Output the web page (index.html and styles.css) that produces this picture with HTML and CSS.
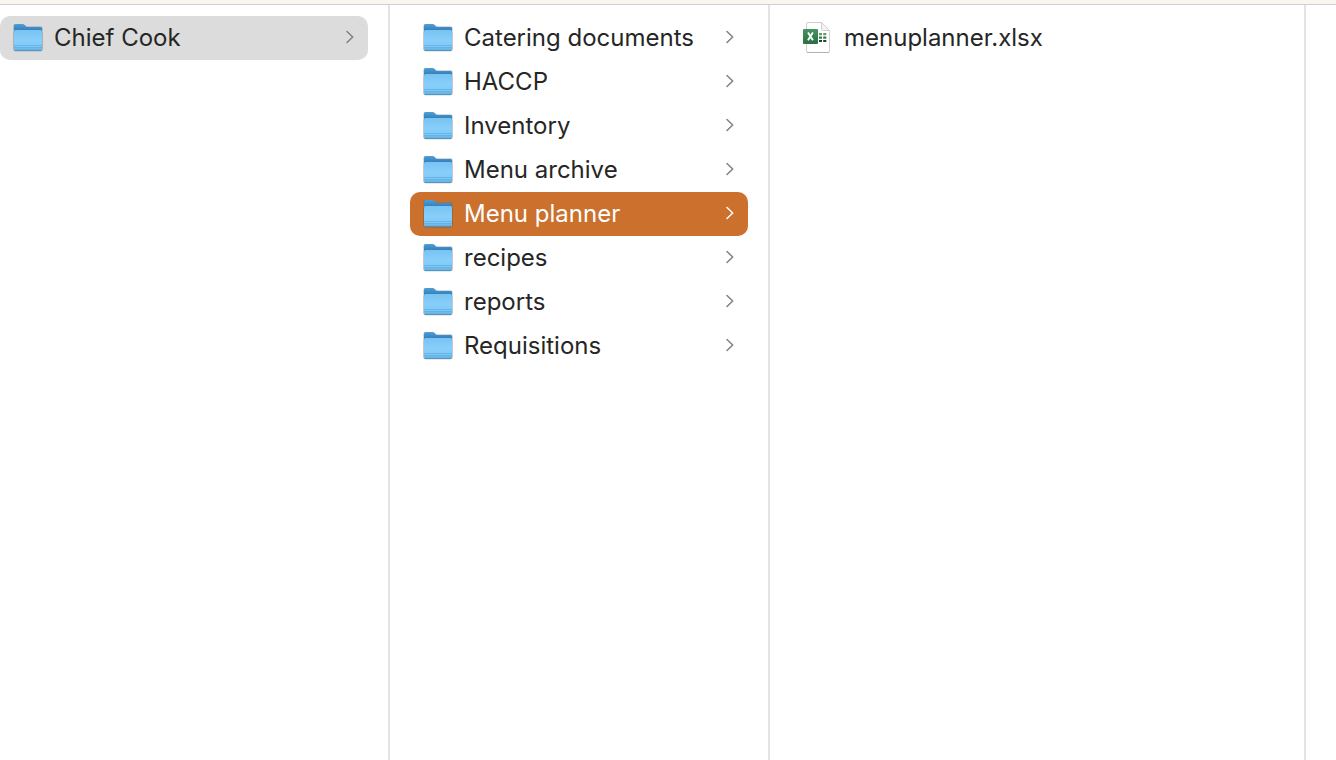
FILE: index.html
```html
<!DOCTYPE html>
<html lang="en">
<head>
<meta charset="utf-8">
<title>Menu planner</title>
<link rel="stylesheet" href="styles.css">
</head>
<body>
<svg class="defs" width="0" height="0" aria-hidden="true">
  <defs>
    <linearGradient id="back" x1="0" y1="0" x2="0" y2="1">
      <stop offset="0" stop-color="#4d9fd6"/><stop offset=".25" stop-color="#3581bd"/><stop offset="1" stop-color="#3581bd"/>
    </linearGradient>
    <linearGradient id="front" x1="0" y1="0" x2="0" y2="1">
      <stop offset="0" stop-color="#78c3f2"/><stop offset=".5" stop-color="#88cefa"/><stop offset="1" stop-color="#7ac6f5"/>
    </linearGradient>
    <linearGradient id="excel" x1="0" y1="0" x2="0" y2="1">
      <stop offset="0" stop-color="#459563"/><stop offset="1" stop-color="#2c6e41"/>
    </linearGradient>
  </defs>
  <symbol id="folder" viewBox="0 0 32 32">
    <path d="M1.500 27V10H30.500V27Q30.500 29.500 28.500 29.500H3.500Q1.500 29.500 1.500 27Z" fill="#000" opacity=".18"/>
    <path d="M1.500 26.500V4Q1.500 2 3.500 2H10Q11.500 2 12.500 3L14.500 4.600H29Q30.500 4.600 30.500 6.500V27Q30.500 29 29 29H3Q1.500 29 1.500 27Z" fill="#55636f" opacity=".5"/>
    <path d="M2 26V4Q2 2 4 2H10Q11.500 2 12.500 3L14.500 5H28.500Q30 5 30 7V26Z" fill="url(#back)"/>
    <path d="M2 9.500Q2 8 3.500 8H28.500Q30 8 30 9.500V27Q30 28.500 28.500 28.500H3.500Q2 28.500 2 27Z" fill="url(#front)"/>
    <path d="M2 25.500H30V27Q30 28.500 28.500 28.500H3.500Q2 28.500 2 27Z" fill="#6fbcec"/>
    <path d="M2 23.500H30M2 25.500H30" stroke="#5cabdf" stroke-width=".7"/>
    <path d="M3 28.300H29" stroke="#3e87bb" stroke-width=".8"/>
  </symbol>
  <symbol id="sheet" viewBox="0 1.500 32 32">
    <path d="M4.500 3Q4.500 1.500 6 1.500H19.500L27.500 9.500V30Q27.500 31.500 26 31.500H6Q4.500 31.500 4.500 30Z" transform="translate(0 .5)" fill="#fff" stroke="#d0d0d0" stroke-width="1"/>
    <path d="M5 32H27" stroke="#aaa" stroke-width=".8"/>
    <path d="M19.500 2V8.500Q19.500 10 21.500 10H27.500Z" fill="#f4f4f4" stroke="#d0d0d0" stroke-width="1"/>
    <path d="M17 12.500H20V14.800H17ZM21.200 12.500H24.300V14.800H21.200Z" fill="#58a267"/>
    <path d="M17 16H20V18.300H17ZM21.200 16H24.300V18.300H21.200Z" fill="#347b4b"/>
    <path d="M17 19.500H20V21.500H17ZM21.200 19.500H24.300V21.500H21.200Z" fill="#194c2b"/>
    <rect x="1" y="8.500" width="15" height="15" rx="1" fill="url(#excel)"/>
    <path d="M6 12 10.900 19.800M10.900 12 6 19.800" stroke="#fff" stroke-width="1.900" fill="none"/>
  </symbol>
  <symbol id="chevron" viewBox="0 0 8 16">
    <path d="M1 1.500 6.700 7 1 12.500" fill="none" stroke="currentColor" stroke-width="1.500" stroke-linecap="round" stroke-linejoin="round"/>
  </symbol>
</svg>
<div class="browser">
  <header class="toolbar"></header>
  <main class="columns">
    <section class="column column-root">
      <button class="item item-open"><svg class="icon"><use href="#folder"/></svg><span class="name">Chief Cook</span><svg class="chevron"><use href="#chevron"/></svg></button>
    </section>
    <section class="column">
      <button class="item"><svg class="icon"><use href="#folder"/></svg><span class="name">Catering documents</span><svg class="chevron"><use href="#chevron"/></svg></button>
      <button class="item"><svg class="icon"><use href="#folder"/></svg><span class="name">HACCP</span><svg class="chevron"><use href="#chevron"/></svg></button>
      <button class="item"><svg class="icon"><use href="#folder"/></svg><span class="name">Inventory</span><svg class="chevron"><use href="#chevron"/></svg></button>
      <button class="item"><svg class="icon"><use href="#folder"/></svg><span class="name">Menu archive</span><svg class="chevron"><use href="#chevron"/></svg></button>
      <button class="item item-selected"><svg class="icon"><use href="#folder"/></svg><span class="name">Menu planner</span><svg class="chevron"><use href="#chevron"/></svg></button>
      <button class="item"><svg class="icon"><use href="#folder"/></svg><span class="name">recipes</span><svg class="chevron"><use href="#chevron"/></svg></button>
      <button class="item"><svg class="icon"><use href="#folder"/></svg><span class="name">reports</span><svg class="chevron"><use href="#chevron"/></svg></button>
      <button class="item"><svg class="icon"><use href="#folder"/></svg><span class="name">Requisitions</span><svg class="chevron"><use href="#chevron"/></svg></button>
    </section>
    <section class="column">
      <button class="item"><svg class="icon"><use href="#sheet"/></svg><span class="name">menuplanner.xlsx</span></button>
    </section>
    <section class="column column-rest"></section>
  </main>
</div>
</body>
</html>
```
FILE: styles.css
```css
* {
  box-sizing: border-box;
}

body {
  margin: 0;
  background: #fff;
  color: #262626;
  font-family: Inter, "Liberation Sans", sans-serif;
}

.defs {
  position: absolute;
}

.browser {
  display: flex;
  flex-direction: column;
  min-height: 100vh;
}

.toolbar {
  height: 5px;
  background: #faf5ef;
  border-bottom: 1px solid #d2d0ce;
}

.columns {
  flex: 1;
  display: grid;
  grid-template-columns: 390px 380px 1fr 30px;
}

.column {
  padding: 11px 20px;
  border-right: 2px solid #e3e3e3;
}

.column-root {
  padding-left: 0;
}

.column-rest {
  padding: 0;
  border-right: 0;
}

.item {
  display: flex;
  align-items: center;
  gap: 10px;
  width: 100%;
  height: 44px;
  padding: 0 14px 0 12px;
  border: 0;
  border-radius: 10px;
  background: none;
  color: inherit;
  font: inherit;
  font-size: 24px;
  line-height: 32px;
  text-align: left;
}

.item-open {
  background: #dcdcdc;
}

.item-selected {
  background: #cb702d;
  color: #fff;
}

.icon {
  flex: none;
  width: 32px;
  height: 32px;
}

.name {
  flex: 1;
  white-space: nowrap;
}

.chevron {
  flex: none;
  width: 8px;
  height: 16px;
  color: #808080;
}

.item-selected .chevron {
  color: #fff;
}
```
